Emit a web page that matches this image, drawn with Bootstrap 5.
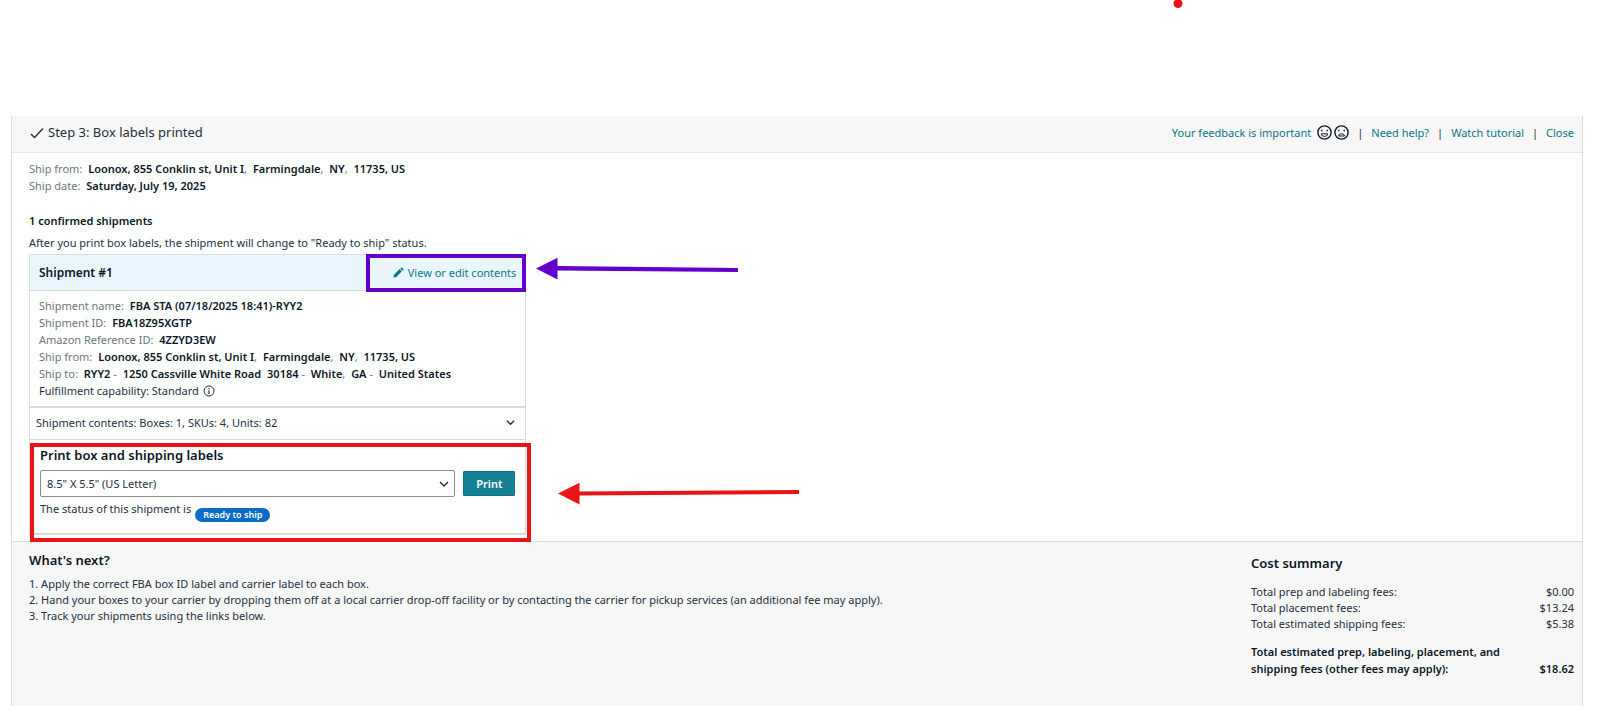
<!DOCTYPE html>
<html lang="en">
<head>
<meta charset="utf-8">
<meta name="viewport" content="width=device-width, initial-scale=1">
<title>Send to Amazon - Step 3</title>
<link href="https://cdn.jsdelivr.net/npm/bootstrap@5.3.0/dist/css/bootstrap.min.css" rel="stylesheet">
<style>
  :root { --ink: #232f3e; --ink-strong: #0b1726; --muted: #6b7677; --teal: #0a7585; --line: #d9dcde; --purple: #6200cc; --red: #e81418; }
  body { font-family: "Noto Sans", "Open Sans", sans-serif; font-size: 11px; line-height: 17px; color: var(--ink); background: #fff; }
  a { color: var(--teal); text-decoration: none; }
  a:hover { text-decoration: underline; }
  b, h2, h3 { font-weight: 600; color: var(--ink-strong); margin: 0; }
  svg { display: block; }
  .canvas-top { height: 116px; overflow: hidden; }
  .red-dot { left: 73.6%; top: -1px; width: 9px; height: 9px; background: var(--red); }
  .workflow { margin: 0 17px 0 11px; min-height: calc(100vh - 116px); border: solid var(--line); border-width: 0 1px; }
  .step-bar { height: 37px; padding: 0 8px 3px 18px; background: #f7f7f7; border-bottom: 1px solid #e4eaea; }
  .step-title { font-size: 13px; font-weight: 400; color: var(--ink); }
  .faces { gap: 2px; margin-left: -2px; }
  .step-body { padding-bottom: 6px; }
  .ship-col { padding-left: 17px; padding-right: 9px; }
  .facts { color: var(--muted); }
  .facts b { margin-left: 3px; }
  .ship-origin { padding-top: 7px; }
  .capability { color: var(--ink); }
  .sub { font-size: 11px; line-height: 17px; margin: 18px 0 5px; }
  .shipment { margin-top: 3px; border: 1px solid var(--line); border-bottom-width: 2px; }
  .shipment-head { height: 36px; background: #e9f6fe; border-bottom: 1px solid var(--line); padding: 0 9px; }
  .title-12 { font-size: 12px; line-height: 18px; }
  .title-13 { font-size: 13px; line-height: 18px; }
  .shipment-facts { padding: 6px 9px 7px; border-bottom: 2px solid var(--line); }
  .contents-toggle { height: 32px; padding: 0 10px 2px 6px; font-size: 11px; color: var(--ink); background: #fff; border: 0; border-bottom: 1px solid var(--line); }
  .print-box { padding: 6px 10px 11px; }
  .print-row { gap: 8px; margin: 6px 0 3px; }
  .size-select { height: 27px; padding: 0 28px 0 6px; font-size: 11px; line-height: 17px; color: var(--ink); border: 1px solid #888c8c; border-radius: 2px; background-position: right 5px center; background-size: 10px 10px; background-image: url("data:image/svg+xml,%3csvg xmlns='http://www.w3.org/2000/svg' viewBox='0 0 10 10'%3e%3cpath fill='none' stroke='%23232f3e' stroke-width='1.5' d='M1 3l4 4 4-4'/%3e%3c/svg%3e"); }
  .print-btn { width: 52px; height: 25px; padding: 0; font-size: 11px; font-weight: 600; line-height: 23px; color: #fff; background: #148294; border: 1px solid #0d7485; border-radius: 1px; }
  .status-pill { margin-top: 8px; padding: 0 8px; font-size: 9px; font-weight: 600; line-height: 14px; color: #fff; background: #0a6cc7; border-radius: 7px; }
  .frame { position: absolute; pointer-events: none; border: 4px solid; }
  .frame-purple { color: var(--purple); top: -1px; right: -1px; width: 160px; height: 38px; }
  .frame-red { color: var(--red); top: 3px; bottom: -9px; left: 0; right: -6px; }
  .arrow { position: absolute; overflow: visible; pointer-events: none; left: 100%; }
  .arrow-purple { margin-left: 11px; top: 2px; color: var(--purple); }
  .arrow-red { margin-left: 33px; top: 42px; color: var(--red); }
  .summary { background: #f7f7f7; border-top: 1px solid var(--line); padding: 9px 8px 0 17px; }
  .summary ol, .costs { line-height: 16px; }
  .summary ol { margin: 7px 0 0; }
  .costs { width: 323px; margin-top: 3px; }
  .costs td { padding: 0; vertical-align: bottom; }
  .costs .grand td { padding-top: 11px; line-height: 17px; font-weight: 600; color: var(--ink-strong); }
</style>
</head>
<body>
<div class="canvas-top position-relative"><span class="red-dot position-absolute rounded-circle translate-middle-x"></span></div>

<main class="workflow d-flex flex-column">
  <header class="step-bar d-flex align-items-center justify-content-between">
    <div class="d-flex align-items-center gap-1">
      <svg width="14" height="12" viewBox="0 0 14 12" fill="none" stroke="#232f3e" stroke-width="1.4"><path d="M1 7l3.500 3.500L13 1.500"/></svg>
      <h1 class="step-title mb-0">Step 3: Box labels printed</h1>
    </div>
    <nav class="d-flex align-items-center gap-2">
      <a href="#">Your feedback is important</a>
      <span class="faces d-flex">
        <svg width="15" height="15" viewBox="0 0 15 15" fill="none" stroke="#111c28" stroke-width="1.400"><circle cx="7.500" cy="7.500" r="6.600"/><path d="M4.300 8.800h6.400a3.200 2.600 0 0 1-6.400 0z" fill="#fff" stroke-width="1"/><path d="M4.800 4.800v1.400M10.200 4.800v1.400"/></svg>
        <svg width="15" height="15" viewBox="0 0 15 15" fill="none" stroke="#111c28" stroke-width="1.400"><circle cx="7.500" cy="7.500" r="6.600"/><path d="M4.500 11a3 2.200 0 0 1 6 0z" fill="#fff" stroke-width="1"/><path d="M4.800 4.800v1.400M10.200 4.800v1.400"/></svg>
      </span>
      <span>|</span><a href="#">Need help?</a>
      <span>|</span><a href="#">Watch tutorial</a>
      <span>|</span><a href="#">Close</a>
    </nav>
  </header>

  <section class="step-body row g-0">
    <div class="ship-col col-4">
      <div class="ship-origin facts">
        <div>Ship from: <b>Loonox, 855 Conklin st, Unit I</b>, <b>Farmingdale</b>, <b>NY</b>, <b>11735, US</b></div>
        <div>Ship date: <b>Saturday, July 19, 2025</b></div>
      </div>
      <h2 class="sub">1 confirmed shipments</h2>
      <p class="mb-0 text-nowrap">After you print box labels, the shipment will change to "Ready to ship" status.</p>

      <article class="shipment">
        <div class="shipment-head position-relative d-flex align-items-center justify-content-between">
          <h3 class="title-12">Shipment #1</h3>
          <a href="#" class="d-flex align-items-center gap-1">
            <svg width="11" height="11" viewBox="0 0 12 12" fill="currentColor"><path d="M.5 11.500l.6-3L7.300 2.300l2.400 2.400-6.200 6.200zM8 1.600l.9-.9a.8.8 0 0 1 1.100 0l1.300 1.300a.8.8 0 0 1 0 1.100l-.9.9z"/></svg>View or edit contents</a>
          <span class="frame frame-purple"></span>
          <svg class="arrow arrow-purple" width="202" height="23" viewBox="0 0 202 23" fill="currentColor"><path d="M0 11.500L21.500.8v8.300L202 11v4L21.500 13.500v9z"/></svg>
        </div>
        <div class="shipment-facts facts">
          <div>Shipment name: <b>FBA STA (07/18/2025 18:41)-RYY2</b></div>
          <div>Shipment ID: <b>FBA18Z95XGTP</b></div>
          <div>Amazon Reference ID: <b>4ZZYD3EW</b></div>
          <div>Ship from: <b>Loonox, 855 Conklin st, Unit I</b>, <b>Farmingdale</b>, <b>NY</b>, <b>11735, US</b></div>
          <div>Ship to: <b>RYY2</b> - <b>1250 Cassville White Road</b> <b>30184</b> - <b>White</b>, <b>GA</b> - <b>United States</b></div>
          <div class="capability d-flex align-items-center gap-1">Fulfillment capability: Standard
            <svg width="12" height="12" viewBox="0 0 12 12" fill="none" stroke="currentColor"><circle cx="6" cy="6" r="5"/><path d="M6 5.200v3.800M6 3v1.200" stroke-width="1.200"/></svg></div>
        </div>
        <button type="button" class="contents-toggle w-100 d-flex align-items-center justify-content-between">Shipment contents: Boxes: 1, SKUs: 4, Units: 82
          <svg width="9" height="9" viewBox="0 0 10 10" fill="none" stroke="#232f3e" stroke-width="1.600"><path d="M1 3l4 4 4-4"/></svg></button>
        <div class="print-box position-relative">
          <label for="size" class="d-block"><b class="title-13">Print box and shipping labels</b></label>
          <div class="print-row d-flex align-items-center">
            <select id="size" class="form-select size-select"><option>8.5" X 5.5" (US Letter)</option></select>
            <button type="button" class="print-btn flex-shrink-0">Print</button>
          </div>
          <div class="d-flex align-items-start gap-1">The status of this shipment is <span class="status-pill">Ready to ship</span></div>
          <span class="frame frame-red"></span>
          <svg class="arrow arrow-red" width="241" height="23" viewBox="0 0 241 23" fill="currentColor"><path d="M0 11.500L21.500.8v8.700L241 8v4L21.500 13.500v9z"/></svg>
        </div>
      </article>
    </div>
  </section>

  <footer class="summary flex-grow-1 d-flex justify-content-between">
    <div>
      <h2 class="title-13">What's next?</h2>
      <ol class="list-unstyled">
        <li>1. Apply the correct FBA box ID label and carrier label to each box.</li>
        <li>2. Hand your boxes to your carrier by dropping them off at a local carrier drop-off facility or by contacting the carrier for pickup services (an additional fee may apply).</li>
        <li>3. Track your shipments using the links below.</li>
      </ol>
    </div>
    <div class="costs flex-shrink-0">
      <h2 class="title-13 mb-2 pb-1">Cost summary</h2>
      <table class="w-100">
        <tbody>
          <tr><td>Total prep and labeling fees:</td><td class="text-end">$0.00</td></tr>
          <tr><td>Total placement fees:</td><td class="text-end">$13.24</td></tr>
          <tr><td>Total estimated shipping fees:</td><td class="text-end">$5.38</td></tr>
          <tr class="grand"><td>Total estimated prep, labeling, placement, and<br>shipping fees (other fees may apply):</td><td class="text-end">$18.62</td></tr>
        </tbody>
      </table>
    </div>
  </footer>
</main>
<script src="https://cdn.jsdelivr.net/npm/bootstrap@5.3.0/dist/js/bootstrap.bundle.min.js"></script>
</body>
</html>
